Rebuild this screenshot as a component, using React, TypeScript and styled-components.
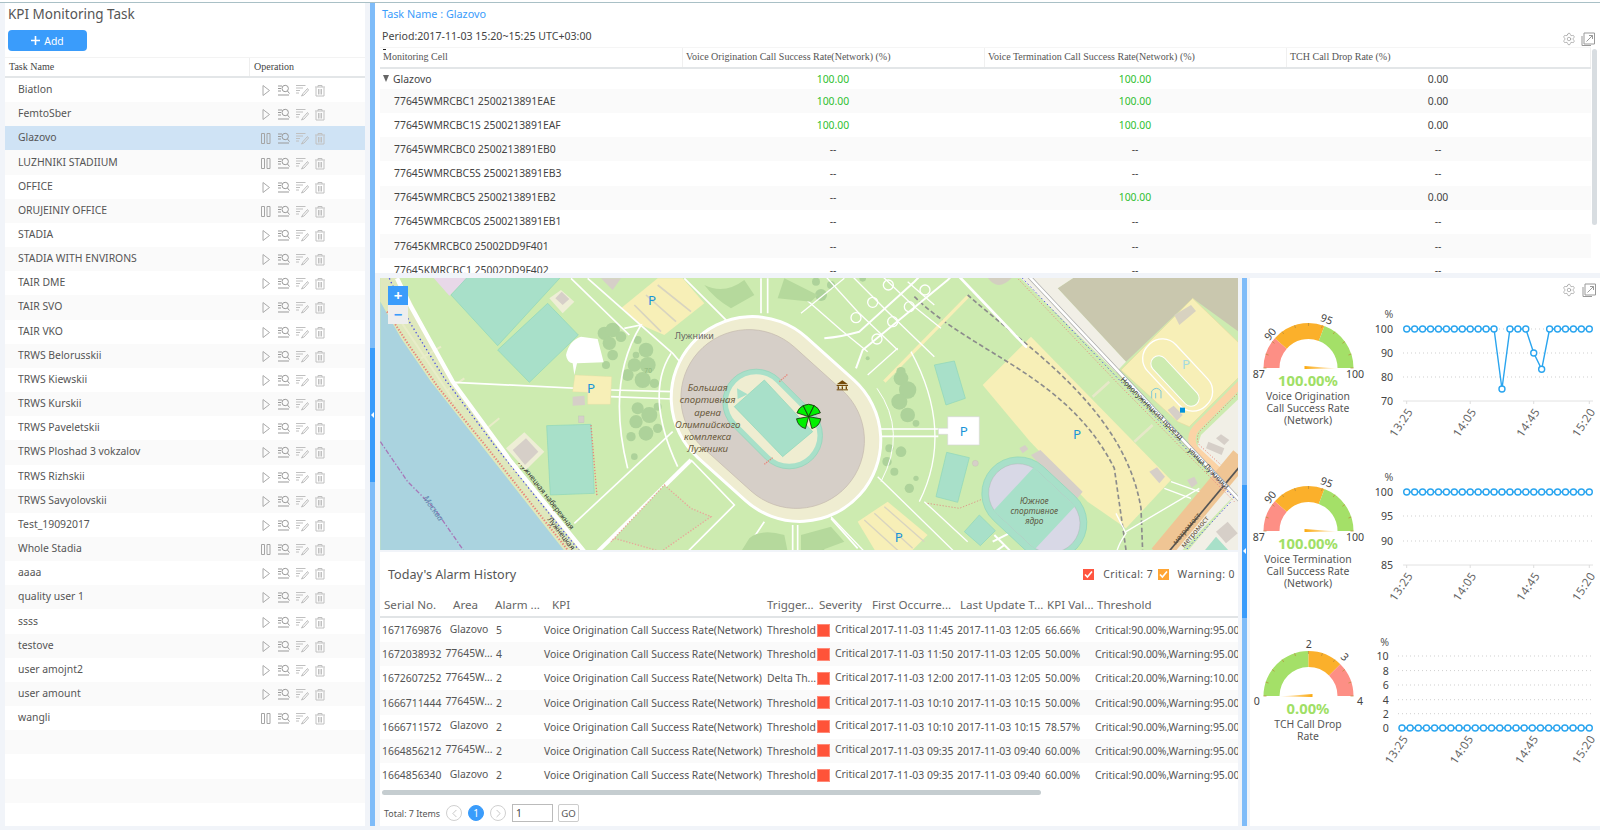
import React from "react";
import styled, { createGlobalStyle } from "styled-components";
import { ChevronLeft, ChevronRight, Settings } from "lucide-react";

const FONT = '"Noto Sans", "Open Sans", Arial, sans-serif';
const SERIF = '"Liberation Serif", "Times New Roman", serif';

const Global = createGlobalStyle`
  html, body { margin: 0; padding: 0; background: #f1f4f9; }
  * { box-sizing: border-box; }
  body { font-family: ${FONT}; font-size: 10.4px; color: #555; }
`;

const Page = styled.div`
  width: 1600px; height: 830px; overflow: hidden; display: flex; flex-direction: column; background: #f1f4f9;
`;
const TopEdge = styled.div`
  height: 3px; flex: none; background: #fff; border-bottom: 1px solid #a9c0c6;
`;
const Body = styled.div`
  height: 823px; flex: none; display: flex; padding-left: 5px;
`;

/* sidebar */
const Sidebar = styled.aside`
  width: 360px; flex: none; background: #fff; overflow: hidden; display: flex; flex-direction: column;
`;
const Title = styled.h1`
  margin: 0; padding-left: 3px; height: 22px; line-height: 22px; font-size: 13.5px; font-weight: 400; color: #555;
`;
const AddButton = styled.button`
  margin: 5px 0 0 3px; width: 79px; height: 21px; flex: none; border: 0; border-radius: 4px; background: #3a9cfb;
  color: #fff; font: 400 10.4px ${FONT}; display: flex; align-items: center; justify-content: center; gap: 4px; padding: 0;
`;
const ListHead = styled.div`
  margin-top: 6px; height: 21px; flex: none; display: grid; grid-template-columns: 245px 1fr; border-bottom: 2px solid #e3e6e8;
  border-top: 1px solid #f3f3f3; font: 10px ${SERIF}; color: #444; line-height: 17px;
`;
const ListHeadCell = styled.div<{ $divider?: boolean }>`
  padding-left: 4px;
  border-right: ${(p) => (p.$divider ? "1px solid #eee" : "none")};
`;
const TaskRow = styled.div<{ $zebra: boolean; $selected: boolean }>`
  height: 24.17px; flex: none; display: grid; grid-template-columns: 254px 1fr; align-items: center;
  background: ${(p) => (p.$selected ? "#cfe3f5" : p.$zebra ? "#fafafa" : "#fff")};
`;
const TaskName = styled.div`
  padding: 0 0 2px 13px; font-size: 10.4px; color: #555; white-space: nowrap;
`;
const Ops = styled.div`
  display: flex; gap: 4px; height: 14px;
`;

/* splitter */
const Splitter = styled.div<{ $from: number; $to: number; $gapL: number; $gapR: number; $w: number; $arrow: number }>`
  position: relative; flex: none; width: ${(p) => p.$w}px; margin: 0 ${(p) => p.$gapR}px 0 ${(p) => p.$gapL}px;
  background: linear-gradient(#7fbcf9 ${(p) => p.$from}px, #3a9cfb ${(p) => p.$from}px, #3a9cfb ${(p) => p.$to}px, #7fbcf9 ${(p) => p.$to}px);
  &::after {
    content: ""; position: absolute; left: 0.5px; top: ${(p) => p.$arrow}px;
    border: 3px solid transparent; border-right: 3px solid #fff; border-left: 0;
  }
`;

/* main */
const Main = styled.main`
  flex: 1; min-width: 0; display: flex; flex-direction: column;
`;
const CellPanel = styled.section`
  height: 270px; flex: none; background: #fff; position: relative; overflow: hidden;
`;
const TaskTitle = styled.div`
  height: 22px; line-height: 22px; padding-left: 7px; color: #3a9cfb; font-size: 10.8px;
`;
const PeriodRow = styled.div`
  height: 22px; padding: 0 5px 0 7px; display: flex; justify-content: space-between; align-items: flex-end; color: #444; font-size: 10.6px; line-height: 22px;
`;
const Period = styled.span`
  align-self: center;
`;
const Tools = styled.div`
  display: flex; gap: 5px; align-items: center; color: #888; height: 14px; margin-bottom: 1px;
`;
const CellGrid = styled.div`
  margin-left: 5px; width: 1211px;
`;
const CellHead = styled.div`
  display: grid; grid-template-columns: 303px 302px 302px 304px; height: 22px; border-bottom: 2px solid #e3e6e8; border-top: 1px solid #f5f5f5;
  font: 10px ${SERIF}; color: #555; line-height: 18px; position: relative;
  &::before { content: ""; position: absolute; left: 3px; top: 1px; width: 3px; height: 3px; border-top: 1px solid #222; }
`;
const CellHeadItem = styled.div`
  padding-left: 3px; border-right: 1px solid #f0f0f0; white-space: nowrap;
`;
const CellRow = styled.div<{ $zebra: boolean; $first?: boolean }>`
  display: grid; grid-template-columns: 303px 302px 302px 304px; align-items: center; padding-bottom: 1px;
  height: ${(p) => (p.$first ? "20px" : "24.17px")};
  background: ${(p) => (p.$zebra ? "#fafafa" : "#fff")};
`;
const CellName = styled.div<{ $root?: boolean }>`
  padding-left: ${(p) => (p.$root ? 3 : 14)}px; display: flex; align-items: center; gap: 4px; white-space: nowrap; color: #444; font-size: 10.4px;
`;
const Caret = styled.span`
  width: 0; height: 0; border-left: 3.5px solid transparent; border-right: 3.5px solid transparent; border-top: 7px solid #666;
`;
const CellValue = styled.div<{ $good?: boolean }>`
  text-align: center; font-size: 10.4px; padding-right: 2px; color: ${(p) => (p.$good ? "#2fbf2f" : "#444")};
`;
const VScroll = styled.div`
  position: absolute; right: 3px; top: 46px; width: 5px; height: 176px; border-radius: 3px; background: #d8dde1;
`;

const LowerRow = styled.div`
  margin-top: 5px; height: 548px; flex: none; display: flex; padding-left: 5px;
`;
const LeftColumn = styled.div`
  width: 858px; flex: none; display: flex; flex-direction: column;
`;
const MapBox = styled.div`
  height: 272px; flex: none; position: relative; overflow: hidden;
`;
const MapSvg = styled.svg`
  display: block; width: 858px; height: 272px;
`;
const Zoom = styled.div`
  position: absolute; left: 8px; top: 8px; width: 20px; display: flex; flex-direction: column;
`;
const ZoomBtn = styled.div<{ $on?: boolean }>`
  height: 19px; background: ${(p) => (p.$on ? "#3a9cfb" : "#eee")}; color: ${(p) => (p.$on ? "#fff" : "#3a9cfb")};
  font: 700 15px/18px ${FONT}; text-align: center;
`;

/* alarms */
const AlarmPanel = styled.section`
  margin-top: 2px; flex: 1; background: #fff; overflow: hidden; display: flex; flex-direction: column;
`;
const AlarmTop = styled.div`
  height: 44px; flex: none; display: flex; align-items: center; justify-content: space-between; padding: 0 3px 0 8px;
`;
const AlarmTitle = styled.div`
  font-size: 12.6px; color: #555;
`;
const Legend = styled.div`
  display: flex; align-items: center; font-size: 10.4px; letter-spacing: 0.45px; color: #555;
`;
const LegendItem = styled.span`
  display: flex; align-items: center; gap: 9px; margin-left: 4.5px;
`;
const Check = styled.span<{ $c: string }>`
  width: 11px; height: 11px; background: ${(p) => p.$c}; display: flex; align-items: center; justify-content: center;
`;
const COLS = "64px 50px 48px 224px 51px 53px 87px 88px 50px 143px";
const AlarmHead = styled.div`
  height: 22px; flex: none; display: grid; grid-template-columns: ${COLS}; border-bottom: 2px solid #e1e4e6; font-size: 11.6px; color: #666; line-height: 18px;
`;
const AlarmHeadCell = styled.div<{ $pad: number }>`
  padding-left: ${(p) => p.$pad}px; white-space: nowrap; overflow: hidden;
`;
const AlarmRow = styled.div<{ $zebra: boolean }>`
  height: 24.17px; flex: none; display: grid; grid-template-columns: ${COLS}; align-items: center; background: ${(p) => (p.$zebra ? "#fafafa" : "#fff")};
  font-size: 10.4px; color: #555; white-space: nowrap;
`;
const Cell = styled.div<{ $pad?: number; $center?: boolean; $up?: boolean }>`
  padding-left: ${(p) => p.$pad ?? 0}px; overflow: hidden; text-align: ${(p) => (p.$center ? "center" : "left")};
  padding-bottom: ${(p) => (p.$up ? 3 : 0)}px;
`;
const SeverityCell = styled.div`
  display: flex; align-items: center; gap: 5px;
`;
const SevMark = styled.span`
  width: 13px; height: 13px; flex: none; background: #ff5339; border: 1px solid #ff8a78;
`;
const SevText = styled.span`
  padding-bottom: 3px;
`;
const HScrollTrack = styled.div`
  height: 5px; margin: 3px 0 0 2px; width: 659px; flex: none; border-radius: 3px; background: #c5cdd0;
`;
const Pager = styled.div`
  margin-top: 9px; padding-left: 4px; display: flex; align-items: center; height: 18px; font-size: 8.9px; color: #555;
`;
const PageCircle = styled.span<{ $on?: boolean }>`
  width: 16px; height: 16px; border-radius: 50%; margin-left: 6px; display: flex; align-items: center; justify-content: center;
  border: 1px solid ${(p) => (p.$on ? "#3a9cfb" : "#d0d0d0")}; background: ${(p) => (p.$on ? "#3a9cfb" : "#fff")};
  color: ${(p) => (p.$on ? "#fff" : "#aaa")}; font-size: 10px;
`;
const PageInput = styled.input`
  width: 41px; height: 18px; margin-left: 6px; border: 1px solid #bbb; padding: 0 3px; font: 10.4px ${FONT}; color: #444;
`;
const GoButton = styled.button`
  width: 21px; height: 18px; margin-left: 5px; padding: 0; border: 1px solid #ccc; border-radius: 2px; background: #fff; font: 9.6px ${FONT}; color: #555;
`;

/* right */
const KpiPanel = styled.section`
  flex: 1; background: #fff; min-width: 0; display: flex; flex-direction: column;
`;
const KpiTools = styled.div`
  height: 22px; flex: none; display: flex; justify-content: flex-end; align-items: center; gap: 6px; padding: 1px 4px 0 0; color: #888;
`;
const KpiRow = styled.div<{ $top: number }>`
  height: 163px; flex: none; margin-top: ${(p) => p.$top}px; display: flex;
`;
const GaugeCol = styled.div`
  width: 116px; flex: none; text-align: center;
`;
const GaugeValue = styled.div`
  font: 700 14.8px/14px ${FONT}; color: #a0df66; margin-top: -2.5px;
`;
const GaugeTitle = styled.div`
  margin-top: 3.5px; font-size: 10.4px; line-height: 12px; color: #555;
`;
const GaugeLine = styled.div`
  white-space: nowrap;
`;
const ChartSvg = styled.svg`
  display: block; flex: none; overflow: visible;
`;
const GaugeSvg = styled.svg`
  display: block; overflow: visible;
`;

/* icons */
const I = { width: 14, height: 14, viewBox: "0 0 14 14", fill: "none" };
const PlayIcon = () => (
  <svg {...I}><path d="M4 2.5 L10.5 7.5 L4 12.5 Z" stroke="#aaa" /></svg>
);
const PauseIcon = () => (
  <svg {...I}><path d="M2.5 2.5h3v10h-3zM8 2.5h3v10h-3z" stroke="#a5a5a5" /></svg>
);
const DetailIcon = () => (
  <svg {...I}><path d="M1 3h4M1 5.5h3M1 8h3M1 12h11" stroke="#999" /><circle cx="8.2" cy="5.5" r="3.2" stroke="#999" /><path d="M10.5 8l2 2.6" stroke="#999" /></svg>
);
const EditIcon = () => (
  <svg {...I}><path d="M1 2.5h9.5M1 5h7M1 7.5h4M1 10h3" stroke="#c0c0c0" /><path d="M12.5 5.5 L8 10.5 L6.5 13 L9 12 L13.5 7 Z" stroke="#bdbdbd" /></svg>
);
const TrashIcon = () => (
  <svg {...I}><path d="M2 4h10M5 4V2.5h4V4M3 4.5v8.5h8V4.5M5.5 6v5.5M7 6v5.5M8.5 6v5.5" stroke="#c0c0c0" /></svg>
);
const ExpandIcon = () => (
  <svg width="14" height="14" viewBox="0 0 14 14" fill="none"><path d="M3 1h10.5v11H3zM1 4v9.5h9" stroke="#999" /><path d="M5.5 9.5l6-6M8 3.5h3.5V7" stroke="#999" /></svg>
);
const Tick = () => (
  <svg width="9" height="9" viewBox="0 0 9 9" fill="none"><path d="M1 4.5l2.4 2.6L8 1.5" stroke="#fff" strokeWidth="1.6" /></svg>
);

const tasks: [string, boolean][] = [
  ["Biatlon", false], ["FemtoSber", false], ["Glazovo", true], ["LUZHNIKI STADIIUM", true], ["OFFICE", false], ["ORUJEINIY OFFICE", true],
  ["STADIA", false], ["STADIA WITH ENVIRONS", false], ["TAIR DME", false], ["TAIR SVO", false], ["TAIR VKO", false], ["TRWS Belorusskii", false],
  ["TRWS Kiewskii", false], ["TRWS Kurskii", false], ["TRWS Paveletskii", false], ["TRWS Ploshad 3 vokzalov", false], ["TRWS Rizhskii", false],
  ["TRWS Savyolovskii", false], ["Test_19092017", false], ["Whole Stadia", true], ["aaaa", false], ["quality user 1", false], ["ssss", false],
  ["testove", false], ["user amojnt2", false], ["user amount", false], ["wangli", true],
];
const cells: [string, string, string, string][] = [
  ["77645WMRCBC1 2500213891EAE", "100.00", "100.00", "0.00"],
  ["77645WMRCBC1S 2500213891EAF", "100.00", "100.00", "0.00"],
  ["77645WMRCBC0 2500213891EB0", "--", "--", "--"],
  ["77645WMRCBC5S 2500213891EB3", "--", "--", "--"],
  ["77645WMRCBC5 2500213891EB2", "--", "100.00", "0.00"],
  ["77645WMRCBC0S 2500213891EB1", "--", "--", "--"],
  ["77645KMRCBC0 25002DD9F401", "--", "--", "--"],
  ["77645KMRCBC1 25002DD9F402", "--", "--", "--"],
];
const alarms = [
  ["1671769876", "Glazovo", "5", "Threshold", "2017-11-03 11:45", "2017-11-03 12:05", "66.66%", "Critical:90.00%,Warning:95.00%"],
  ["1672038932", "77645W...", "4", "Threshold", "2017-11-03 11:50", "2017-11-03 12:05", "50.00%", "Critical:90.00%,Warning:95.00%"],
  ["1672607252", "77645W...", "2", "Delta Th...", "2017-11-03 12:00", "2017-11-03 12:05", "50.00%", "Critical:20.00%,Warning:10.00%"],
  ["1666711444", "77645W...", "2", "Threshold", "2017-11-03 10:10", "2017-11-03 10:15", "50.00%", "Critical:90.00%,Warning:95.00%"],
  ["1666711572", "Glazovo", "2", "Threshold", "2017-11-03 10:10", "2017-11-03 10:15", "78.57%", "Critical:90.00%,Warning:95.00%"],
  ["1664856212", "77645W...", "2", "Threshold", "2017-11-03 09:35", "2017-11-03 09:40", "60.00%", "Critical:90.00%,Warning:95.00%"],
  ["1664856340", "Glazovo", "2", "Threshold", "2017-11-03 09:35", "2017-11-03 09:40", "60.00%", "Critical:90.00%,Warning:95.00%"],
];
const alarmHeads: [string, number][] = [
  ["Serial No.", 4], ["Area", 9], ["Alarm ...", 1], ["KPI", 10], ["Trigger...", 1], ["Severity", 2], ["First Occurre...", 2], ["Last Update T...", 3], ["KPI Val...", 2], ["Threshold", 2],
];

type Band = [number, number, string];
type Lab = [number, number, number, string];
const GX = 58.5, GY = 68, RO = 45, RI = 29;
const pt = (f: number, r: number) => [GX - r * Math.cos(Math.PI * f), GY - r * Math.sin(Math.PI * f)];
const arc = (a: number, b: number) => {
  const [x1, y1] = pt(a, RO), [x2, y2] = pt(b, RO), [x3, y3] = pt(b, RI), [x4, y4] = pt(a, RI);
  return `M${x1} ${y1}A${RO} ${RO} 0 0 1 ${x2} ${y2}L${x3} ${y3}A${RI} ${RI} 0 0 0 ${x4} ${y4}Z`;
};
const Gauge = ({ bands, labels, needle, id }: { bands: Band[]; labels: Lab[]; needle: number; id: string }) => {
  const dir = needle;
  return (
    <GaugeSvg width={116} height={75} viewBox="0 0 116 75">
      <defs>
        <linearGradient id={id} x1={dir > 0 ? 0 : 1} x2={dir > 0 ? 1 : 0} y1="0" y2="0">
          <stop offset="0" stopColor="#fba90f" /><stop offset="1" stopColor="#fba90f" stopOpacity="0.1" />
        </linearGradient>
      </defs>
      {bands.map((b) => <path key={b[0]} d={arc(b[0], b[1])} fill={b[2]} />)}
      {Array.from({ length: 11 }).map((_, i) => {
        const [a, b] = pt(i / 10, RO), [c, d] = pt(i / 10, RO - 3);
        return <line key={i} x1={a} y1={b} x2={c} y2={d} stroke="#b8893a" strokeWidth="0.7" />;
      })}
      <path d={`M${GX - 4 * dir} ${GY - 2}L${GX + 29 * dir} ${GY + 0.5}L${GX - 4 * dir} ${GY + 1}Z`} fill={`url(#${id})`} />
      {labels.map((l) => (
        <text key={l[3]} x={l[0]} y={l[1]} transform={`rotate(${l[2]} ${l[0]} ${l[1]})`} textAnchor="middle" dominantBaseline="central" fontFamily={FONT} fontSize="10.6" fill="#444">{l[3]}</text>
      ))}
    </GaugeSvg>
  );
};

const XLABELS: Record<number, string> = { 0: "13:25", 8: "14:05", 16: "14:45", 23: "15:20" };
type ChartProps = { values: number[]; y: (v: number) => number; ticks: [string, number][]; axis: number; p0: number; p1: number; g0: number; labelX: number; pctY: number };
const Chart = ({ values, y, ticks, axis, p0, p1, g0, labelX, pctY }: ChartProps) => {
  const step = (p1 - p0) / (values.length - 1);
  const xs = values.map((_, i) => p0 + i * step);
  return (
    <ChartSvg width={235} height={163} viewBox="0 0 235 163">
      <text x={labelX - 4} y={pctY} textAnchor="middle" dominantBaseline="central" fontFamily={FONT} fontSize="10.6" fill="#555">%</text>
      {ticks.map(([t, ty], i) => {
        const solid = i === ticks.length - 1 && ticks.length < 5;
        return (
          <g key={t}>
            <line x1={g0} x2={227} y1={ty} y2={ty} stroke={solid ? "#e2e2e2" : "#cfcfcf"} strokeDasharray={solid ? undefined : "1 3"} />
            <text x={labelX} y={ty} textAnchor="end" dominantBaseline="central" fontFamily={FONT} fontSize="10.6" fill="#444">{t}</text>
          </g>
        );
      })}
      {[0, 8, 16, 23].map((i) => (
        <g key={i}>
          <line x1={xs[i]} x2={xs[i]} y1={axis} y2={axis + 3} stroke="#ddd" />
          <text x={xs[i] + 3} y={axis + 8} textAnchor="end" dominantBaseline="central" transform={`rotate(-56 ${xs[i] + 3} ${axis + 8})`} fontFamily={FONT} fontSize="11.5" letterSpacing="0.5" fill="#666">
            {XLABELS[i]}
          </text>
        </g>
      ))}
      <polyline points={values.map((v, i) => `${xs[i]},${y(v)}`).join(" ")} fill="none" stroke="#2aa5ef" strokeWidth="1.4" />
      {values.map((v, i) => <circle key={i} cx={xs[i]} cy={y(v)} r="3" fill="#fff" stroke="#2aa5ef" strokeWidth="1.4" />)}
    </ChartSvg>
  );
};

const v1 = [...Array(12).fill(100), 75, 100, 100, 100, 90, 83.2, ...Array(6).fill(100)] as number[];
const v2 = Array(24).fill(100) as number[];
const v3 = Array(24).fill(0) as number[];

const Z4 = "translate(370 275) scale(0.33333)";
const Z5 = "translate(800 275) scale(0.33333)";
const PITCH = "#a8e0c9", PITCHS = "#8cd6ba", LOT = "#f7efb7", BLD = "#d6cfc8", PALE = "#efedd1", BLUE = "#1a95d8", TREE = "#add29a";
const LBL = { fontFamily: FONT, fontStyle: "italic" as const, textAnchor: "middle" as const };

const Trees = ({ spots }: { spots: number[][] }) => (
  <g fill={TREE}>{spots.map((s, i) => <circle key={i} cx={s[0]} cy={s[1]} r={s[2]} />)}</g>
);
const treesZ4 = [
  [700, 175, 20], [725, 165, 22], [750, 185, 16], [715, 205, 20], [725, 240, 16], [705, 270, 12],
  [800, 195, 12], [825, 225, 22], [790, 270, 20], [830, 270, 24], [770, 300, 18], [815, 315, 24], [850, 325, 14], [795, 240, 10],
  [800, 400, 18], [835, 420, 24], [795, 440, 20], [780, 485, 14], [825, 475, 22], [860, 460, 14], [790, 545, 10], [860, 395, 12],
];
const treesZ5 = [
  [300, 310, 22], [320, 345, 26], [295, 380, 24], [320, 420, 22], [300, 290, 14], [345, 445, 10],
  [265, 520, 12], [258, 560, 14], [300, 530, 16], [280, 590, 12], [325, 640, 14], [345, 610, 8],
  [60, 60, 18], [45, 20, 12], [90, 30, 12], [185, 10, 10], [200, 250, 6],
  [30, 810, 16], [60, 815, 12],
];

const MapArt = () => (
  <MapSvg viewBox="379 278 858 272">
    <rect x="379" y="278" width="858" height="272" fill="#cdebb0" />
    <g transform={Z5}>
      <polygon points="770,40 830,0 1320,0 1320,175 1175,70 975,260" fill="#c9c7ae" />
      <polygon points="650,0 830,0 770,40 975,260 945,292" fill="#f1efe6" />
      <polygon points="960,285 1175,70 1320,210 1320,300 1165,455 1130,440" fill={LOT} stroke="#e6d9a0" strokeWidth="2" />
      <rect x="-24" y="-95" width="48" height="190" rx="24" transform="translate(1122,318) rotate(-43)" fill="#cdebb0" stroke="#fff" strokeWidth="3" />
      <rect x="-58" y="-125" width="116" height="250" rx="55" transform="translate(1130,300) rotate(-43)" fill="none" stroke="#fff" strokeWidth="4" />
      <polygon points="1120,120 1170,90 1185,108 1135,150" fill="#d8d2c0" />
      <polygon points="1100,405 1118,392 1145,420 1128,437" fill={BLD} />
      <rect x="1137" y="398" width="15" height="15" fill="#0092da" />
      <text x="1155" y="282" fontFamily={FONT} fontSize="40" fill="#a5dbe0" textAnchor="middle">P</text>
      <path d="M1052 370v-22q14-16 28 0v22M1064 370v-16" stroke="#80c9d6" strokeWidth="3" fill="none" />
      <polygon points="1200,480 1320,365 1320,560 1240,625 1190,510" fill="#f1efe6" />
      <polygon points="1215,520 1222,500 1270,520 1262,540" fill={BLD} />
      <polygon points="1245,490 1260,478 1285,495 1270,510" fill={BLD} />
      <path d="M1320 325L1195 450Q1160 480 1180 520L1320 650" fill="none" stroke="#fbd3a6" strokeWidth="22" />
      <path d="M1320 345L1205 460Q1180 482 1195 510L1320 625" fill="none" stroke="#ec7a6a" strokeWidth="3" strokeDasharray="3 6" />
      <polygon points="1080,840 1320,580 1320,640 1130,840" fill="#f1efe6" />
      <path d="M1075 840L1320 545" stroke="#efc594" strokeWidth="60" fill="none" />
      <path d="M1095 840L1320 570" stroke="#555" strokeWidth="5" fill="none" />
      <text transform="translate(1125,810) rotate(-50)" fontFamily={FONT} fontSize="22" fill="#5b4a32">метромост</text>
      <text transform="translate(1150,820) rotate(-50)" fontFamily={FONT} fontSize="22" fill="#5b4a32">метромост</text>
      <polygon points="1150,840 1320,640 1320,840" fill="#f1efe6" />
      <polygon points="1245,770 1280,740 1310,775 1275,805" fill={BLD} />
      <polygon points="1200,840 1245,785 1295,840" fill={PITCH} />
      <path d="M1150 830L1290 680" stroke="#4a50e0" strokeWidth="3" strokeDasharray="4 7" fill="none" />
      <path d="M680 0L1320 680" stroke="#a8a8a8" strokeWidth="12" fill="none" />
      <path d="M680 0L1320 680" stroke="#fff" strokeWidth="8" fill="none" />
      <path d="M640 0L950 325L1300 680" stroke="#e8867a" strokeWidth="3" strokeDasharray="3 6" fill="none" />
      <path d="M655 0L960 320L1300 670" stroke="#4a50e0" strokeWidth="3" strokeDasharray="4 8" fill="none" />
      <polygon points="545,330 690,185 1110,615 975,760 860,680 685,497" fill={LOT} />
      <path d="M340 65C520 240 800 300 940 580L975 825M500 60C680 220 970 400 1020 700L1025 830" fill="none" stroke="#8c8c8c" strokeWidth="5" strokeDasharray="14 8" />
      <path d="M470 0L675 215" stroke="#fff" strokeWidth="8" strokeLinecap="round" />
      <path d="M500 65L250 320" stroke={LOT} strokeWidth="10" />
      <path d="M640 0Q590 60 555 0" fill="#d3cfc0" />
      <Trees spots={treesZ5} />
      <g stroke="#fff" strokeWidth="4" fill="none">
        <path d="M70 190Q120 185 175 170L340 20L360 0" strokeWidth="6" />
        <path d="M165 280L185 225L440 15L455 0" strokeWidth="6" />
        <path d="M0 115L130 10" />
        <path d="M150 0L260 110L400 245M70 0L170 110L290 225M240 0L340 95L420 160M320 20L400 90" />
        <path d="M0 60L120 165L200 230M200 300L290 220" />
        <circle cx="165" cy="128" r="15" /><circle cx="215" cy="82" r="15" /><circle cx="275" cy="140" r="15" /><circle cx="325" cy="95" r="15" /><circle cx="228" cy="192" r="15" /><circle cx="372" cy="45" r="15" /><circle cx="262" cy="30" r="15" />
        <path d="M330 230Q460 470 355 680" /><path d="M228 340Q320 470 240 620" strokeWidth="3" />
        <path d="M240 462H440M240 484H412" strokeWidth="5" />
        <path d="M370 680L500 800M230 605L470 840M90 725L200 840" />
        <path d="M945 715L975 775Q950 810 945 840M975 770L1195 640M1110 620L1195 650M1090 640L1170 670" />
        <path d="M875 365L925 320M1000 500L1055 450" stroke="#e6e8c8" strokeWidth="8" />
      </g>
      <polygon points="400,270 460,258 493,370 435,390" fill={PITCH} stroke={PITCHS} strokeWidth="2" />
      <polygon points="437,532 505,548 470,682 405,665" fill={PITCH} stroke={PITCHS} strokeWidth="2" />
      <circle cx="523" cy="565" r="9" fill={BLD} stroke="#c0b8ae" />
      <polygon points="440,425 535,425 535,510 440,510 440,478 412,478 412,460 440,460" fill="#fff" stroke="#d8d8d8" strokeWidth="2" />
      <text x="488" y="482" fontFamily={FONT} fontSize="40" fill={BLUE} textAnchor="middle">P</text>
      <text x="828" y="492" fontFamily={FONT} fontSize="40" fill={BLUE} textAnchor="middle">P</text>
      <polygon points="690,540 718,525 845,650 820,680" fill={BLD} />
      <polygon points="655,520 672,510 682,522 665,535" fill={BLD} />
      <polygon points="1045,590 1068,577 1092,605 1075,625" fill={BLD} />
      <polygon points="1158,615 1180,605 1190,625 1172,638" fill={BLD} />
      <polygon points="170,740 260,680 380,780 320,840 230,840" fill={LOT} />
      <path d="M190 735L300 835M220 715L335 820M250 695L370 800" stroke="#d8d4c0" strokeWidth="4" />
      <text x="293" y="802" fontFamily={FONT} fontSize="40" fill={BLUE} textAnchor="middle">P</text>
      <polygon points="490,770 535,720 583,767 538,812" fill={PITCH} stroke={PITCHS} strokeWidth="2" />
      <path d="M380 685L475 700L545 672" stroke="#dd9a8a" strokeWidth="3" strokeDasharray="4 5" fill="none" />
      <path d="M575 800L635 770M580 780L640 840M610 810L570 840" stroke="#fff" strokeWidth="6" fill="none" />
      <g transform="translate(700,700) rotate(43)">
        <rect x="-175" y="-110" width="350" height="220" rx="110" fill={PITCH} stroke={PITCHS} strokeWidth="2" />
        <rect x="-155" y="-88" width="310" height="176" rx="88" fill="#d8d8e6" stroke="#aaa" strokeWidth="1" />
        <rect x="-85" y="-88" width="170" height="176" fill={PITCH} />
      </g>
      <text x="700" y="686" {...LBL} fontSize="25" fill="#5f5a44">Южное</text>
      <text x="700" y="716" {...LBL} fontSize="25" fill="#5f5a44">спортивное</text>
      <text x="700" y="746" {...LBL} fontSize="25" fill="#5f5a44">ядро</text>
      <text transform="translate(1047,405) rotate(45)" fontFamily={FONT} fontSize="22" fill="#333" textAnchor="middle">Новолужнецкий проезд</text>
      <text transform="translate(1218,585) rotate(45)" fontFamily={FONT} fontSize="22" fill="#333" textAnchor="middle">улица Лужники</text>
    </g>
    <g transform={Z4}>
      <polygon points="28,0 80,0 245,320 430,570 650,840 590,840 330,510 180,320 90,190 28,80" fill="#dfe8bd" />
      <polygon points="28,80 90,190 180,320 330,510 590,840 28,840" fill="#aad3df" />
      <path d="M48 110L110 205L200 335L350 520L590 825" fill="none" stroke="#e8867a" strokeWidth="6" strokeDasharray="4 5" />
      <path d="M70 110L250 380M150 250L210 215M230 345L280 310M330 475L385 430M420 590L460 555" stroke="#e8ecc8" strokeWidth="6" fill="none" />
      <path d="M55 10L115 140L220 310L370 510L570 760L632 835" fill="none" stroke="#4a50e0" strokeWidth="4" strokeDasharray="4 8" />
      <path d="M78 10L120 95L245 320L420 560L640 830" fill="none" stroke="#fff" strokeWidth="13" />
      <path d="M28 500L110 620L190 700L280 830" fill="none" stroke="#a777b8" strokeWidth="4" strokeDasharray="14 6 4 6" />
      <text transform="translate(180,705) rotate(55)" fontFamily={FONT} fontStyle="italic" fontSize="25" fill="#5e84ad" textAnchor="middle">Москва</text>
      <text transform="translate(520,665) rotate(52)" fontFamily={FONT} fontSize="22" fill="#333" textAnchor="middle">Лужнецкая набережная</text>
      <text transform="translate(565,780) rotate(52)" fontFamily={FONT} fontSize="22" fill="#333" textAnchor="middle">Лужнецкая</text>
      <polygon points="180,0 300,0 235,62" fill="#e8d8e8" />
      <polygon points="240,60 295,0 575,0 380,212" fill={PITCH} stroke={PITCHS} strokeWidth="2" />
      <polygon points="380,225 530,85 622,180 475,322" fill={PITCH} stroke={PITCHS} strokeWidth="2" />
      <polygon points="527,452 660,448 670,655 538,660" fill={PITCH} stroke={PITCHS} strokeWidth="2" />
      <path d="M660 450L678 665" stroke="#e8867a" strokeWidth="4" strokeDasharray="4 5" />
      <polygon points="405,520 460,472 520,530 465,585" fill="#eeeed6" />
      <polygon points="425,525 465,490 502,530 462,570" fill={BLD} />
      <polygon points="535,70 570,45 610,80 575,115" fill="#eeeed6" />
      <polygon points="553,70 572,50 595,72 575,90" fill={BLD} />
      <polygon points="690,10 750,10 725,45" fill={BLD} />
      <Trees spots={treesZ4} />
      <path d="M585 240Q595 195 630 185L680 192L698 262L618 265L610 300L605 265Q588 262 585 240Z" fill="#fff" />
      <text x="820" y="295" fontFamily={FONT} fontSize="20" fill="#8fb87c">70</text>
      <path d="M250 322L720 345L905 350M720 365L905 372" stroke="#fff" strokeWidth="5" fill="none" />
      <polygon points="612,300 722,305 718,388 650,388 650,352 605,350" fill={LOT} stroke="#e8dca0" />
      <polygon points="605,365 640,362 642,390 605,392" fill={BLD} />
      <rect x="623" y="423" width="16" height="20" fill={BLD} stroke="#bbb" />
      <text x="660" y="354" fontFamily={FONT} fontSize="40" fill={BLUE} textAnchor="middle">P</text>
      <polygon points="750,100 860,10 935,10 1000,85 880,180 810,150" fill={LOT} />
      <path d="M790 90L870 170M825 60L915 140M860 30L960 110" stroke="#d8d4c0" strokeWidth="5" />
      <text x="843" y="90" fontFamily={FONT} fontSize="40" fill={BLUE} textAnchor="middle">P</text>
      <g stroke="#fff" fill="none" strokeWidth="5">
        <path d="M600 10L775 180M650 10L905 235L960 300" />
        <path d="M940 10L1070 140M760 160L810 150Q705 320 770 580" />
        <path d="M900 235Q820 360 920 575" />
        <path d="M1170 10V115M1190 10V115" />
        <path d="M610 745L905 470" />
        <path d="M680 830L960 555" strokeWidth="12" />
        <path d="M960 555L1090 690L950 830M1180 740L1120 830M1265 750V830M1280 750V830M1380 730L1460 820" />
      </g>
      <path d="M880 630L960 700L1020 725L870 830L730 790L720 800Z" fill="#c8e6ae" stroke="#e8a79a" strokeWidth="4" strokeDasharray="4 5" />
      <path d="M1000 30Q1060 60 1120 15L1150 60L1080 100Q1030 70 1000 30ZM1240 10L1340 60L1320 80L1220 70Z" fill="#b5d99c" />
      <path d="M1135 790Q1170 760 1240 780L1250 830H1110ZM1290 780L1380 755L1420 800L1340 830H1290Z" fill="#b5d99c" />
      <g transform="translate(1215,432) rotate(42)">
        <rect x="-339" y="-243" width="678" height="486" rx="243" fill={PALE} stroke="#fff" strokeWidth="9" />
      </g>
      <g transform="translate(1205,432) rotate(42)">
        <rect x="-300" y="-204" width="600" height="408" rx="204" fill={BLD} stroke="#c4b9ae" strokeWidth="2" />
      </g>
      <g transform="translate(1205,432) rotate(45)">
        <rect x="-170" y="-100" width="340" height="200" rx="100" fill={PITCH} stroke={PITCHS} strokeWidth="2" />
        <rect x="-155" y="-85" width="310" height="170" rx="85" fill={PALE} />
      </g>
      <polygon points="1090,395 1180,315 1325,470 1235,545" fill={PITCH} stroke={PITCHS} strokeWidth="2" />
      <polygon points="1098,340 1130,358 1100,372" fill={PITCH} />
      <path d="M1225 320L1250 298M1180 568L1205 548" stroke="#e8867a" strokeWidth="4" strokeDasharray="4 3" />
      <g fill="#734a08">
        <path d="M1397 328L1414 316L1431 328Z" />
        <rect x="1397" y="330" width="34" height="3" />
        <rect x="1400" y="334" width="4" height="9" /><rect x="1412" y="334" width="4" height="9" /><rect x="1424" y="334" width="4" height="9" />
        <rect x="1397" y="343" width="34" height="3" />
      </g>
      <text x="970" y="193" fontFamily={FONT} fontSize="27" fill="#666" textAnchor="middle">Лужники</text>
      {["Большая", "спортивная", "арена", "Олимпийского", "комплекса", "Лужники"].map((t, i) => (
        <text key={t} x="1010" y={348 + i * 36.8} {...LBL} fontSize="29" fill="#6b5b3e">{t}</text>
      ))}
      <g fill="#00f000" stroke="#1a2a10" strokeWidth="2.5">
        {[[-72, -26], [-26, 26], [26, 72], [100, 165], [195, 260]].map(([a, b]) => {
          const r = 37, cx = 1313, cy = 425;
          const p = (d: number) => `${cx + r * Math.sin((d * Math.PI) / 180)} ${cy - r * Math.cos((d * Math.PI) / 180)}`;
          return <path key={a} d={`M${cx} ${cy}L${p(a)}A${r} ${r} 0 0 1 ${p(b)}Z`} />;
        })}
      </g>
    </g>
  </MapSvg>
);

const band3: Band[] = [[0, 0.2308, "#fd8f85"], [0.2308, 0.6154, "#fbb02b"], [0.6154, 1, "#a4e068"]];
const lab3: Lab[] = [[8.7, 74, 0, "87"], [105, 74, 0, "100"], [20, 34, -50, "90"], [76.7, 19, 22, "95"]];

export default function App() {
  return (
    <Page>
      <Global />
      <TopEdge />
      <Body>
        <Sidebar>
          <Title>KPI Monitoring Task</Title>
          <AddButton><svg width="9" height="9" viewBox="0 0 9 9"><path d="M4.5 0v9M0 4.5h9" stroke="#fff" strokeWidth="1.6" /></svg>Add</AddButton>
          <ListHead><ListHeadCell $divider>Task Name</ListHeadCell><ListHeadCell>Operation</ListHeadCell></ListHead>
          {Array.from({ length: 31 }).map((_, i) => {
            const t = tasks[i];
            return (
              <TaskRow key={i} $zebra={i % 2 === 1} $selected={i === 2}>
                {t && <TaskName>{t[0]}</TaskName>}
                {t && <Ops>{t[1] ? <PauseIcon /> : <PlayIcon />}<DetailIcon /><EditIcon /><TrashIcon /></Ops>}
              </TaskRow>
            );
          })}
        </Sidebar>
        <Splitter $w={5} $gapL={5} $gapR={0} $from={345} $to={479} $arrow={409} />
        <Main>
          <CellPanel>
            <TaskTitle>Task Name : Glazovo</TaskTitle>
            <PeriodRow>
              <Period>Period:2017-11-03 15:20~15:25 UTC+03:00</Period>
              <Tools><Settings size={14} strokeWidth={1} /><ExpandIcon /></Tools>
            </PeriodRow>
            <CellGrid>
              <CellHead>
                <CellHeadItem>Monitoring Cell</CellHeadItem>
                <CellHeadItem>Voice Origination Call Success Rate(Network) (%)</CellHeadItem>
                <CellHeadItem>Voice Termination Call Success Rate(Network) (%)</CellHeadItem>
                <CellHeadItem>TCH Call Drop Rate (%)</CellHeadItem>
              </CellHead>
              <CellRow $zebra={false} $first>
                <CellName $root><Caret />Glazovo</CellName>
                <CellValue $good>100.00</CellValue><CellValue $good>100.00</CellValue><CellValue>0.00</CellValue>
              </CellRow>
              {cells.map((c, i) => (
                <CellRow key={c[0]} $zebra={i % 2 === 0}>
                  <CellName>{c[0]}</CellName>
                  <CellValue $good={c[1] !== "--"}>{c[1]}</CellValue>
                  <CellValue $good={c[2] !== "--"}>{c[2]}</CellValue>
                  <CellValue>{c[3]}</CellValue>
                </CellRow>
              ))}
            </CellGrid>
            <VScroll />
          </CellPanel>
          <LowerRow>
            <LeftColumn>
              <MapBox>
                <MapArt />
                <Zoom><ZoomBtn $on>+</ZoomBtn><ZoomBtn>−</ZoomBtn></Zoom>
              </MapBox>
              <AlarmPanel>
                <AlarmTop>
                  <AlarmTitle>Today's Alarm History</AlarmTitle>
                  <Legend>
                    <LegendItem><Check $c="#ff5540"><Tick /></Check>Critical: 7</LegendItem>
                    <LegendItem><Check $c="#ffa534"><Tick /></Check>Warning: 0</LegendItem>
                  </Legend>
                </AlarmTop>
                <AlarmHead>{alarmHeads.map(([t, p]) => <AlarmHeadCell key={t} $pad={p}>{t}</AlarmHeadCell>)}</AlarmHead>
                {alarms.map((a, i) => (
                  <AlarmRow key={a[0]} $zebra={i % 2 === 1}>
                    <Cell $pad={2}>{a[0]}</Cell>
                    <Cell $center $up>{a[1]}</Cell>
                    <Cell $pad={2}>{a[2]}</Cell>
                    <Cell $pad={2}>Voice Origination Call Success Rate(Network)</Cell>
                    <Cell $pad={1}>{a[3]}</Cell>
                    <SeverityCell><SevMark /><SevText>Critical</SevText></SeverityCell>
                    <Cell>{a[4]}</Cell>
                    <Cell>{a[5]}</Cell>
                    <Cell>{a[6]}</Cell>
                    <Cell>{a[7]}</Cell>
                  </AlarmRow>
                ))}
                <HScrollTrack />
                <Pager>
                  Total: 7 Items
                  <PageCircle><ChevronLeft size={13} strokeWidth={1.2} /></PageCircle>
                  <PageCircle $on>1</PageCircle>
                  <PageCircle><ChevronRight size={13} strokeWidth={1.2} /></PageCircle>
                  <PageInput defaultValue="1" />
                  <GoButton>GO</GoButton>
                </Pager>
              </AlarmPanel>
            </LeftColumn>
            <Splitter $w={5} $gapL={4} $gapR={3} $from={207} $to={340} $arrow={270} />
            <KpiPanel>
              <KpiTools><Settings size={14} strokeWidth={1} /><ExpandIcon /></KpiTools>
              <KpiRow $top={0}>
                <GaugeCol>
                  <Gauge id="g1" needle={1} bands={band3} labels={lab3} />
                  <GaugeValue>100.00%</GaugeValue>
                  <GaugeTitle><GaugeLine>Voice Origination</GaugeLine><GaugeLine>Call Success Rate</GaugeLine><GaugeLine>(Network)</GaugeLine></GaugeTitle>
                </GaugeCol>
                <Chart values={v1} y={(v) => 29 + (100 - v) * 2.4} ticks={[["100", 29], ["90", 53], ["80", 77], ["70", 101]]} axis={101} p0={40.7} p1={223.3} g0={37} labelX={27} pctY={14} />
              </KpiRow>
              <KpiRow $top={0}>
                <GaugeCol>
                  <Gauge id="g2" needle={1} bands={band3} labels={lab3} />
                  <GaugeValue>100.00%</GaugeValue>
                  <GaugeTitle><GaugeLine>Voice Termination</GaugeLine><GaugeLine>Call Success Rate</GaugeLine><GaugeLine>(Network)</GaugeLine></GaugeTitle>
                </GaugeCol>
                <Chart values={v2} y={() => 29} ticks={[["100", 29], ["95", 53], ["90", 78], ["85", 102]]} axis={102} p0={40.7} p1={223.3} g0={37} labelX={27} pctY={14} />
              </KpiRow>
              <KpiRow $top={2}>
                <GaugeCol>
                  <Gauge id="g3" needle={-1} bands={[[0, 0.5, "#a4e068"], [0.5, 0.75, "#fbb02b"], [0.75, 1, "#fd8f85"]]} labels={[[6.7, 73, 0, "0"], [110, 73, 0, "4"], [58.7, 16, 0, "2"], [95, 28.7, 45, "3"]]} />
                  <GaugeValue>0.00%</GaugeValue>
                  <GaugeTitle><GaugeLine>TCH Call Drop</GaugeLine><GaugeLine>Rate</GaugeLine></GaugeTitle>
                </GaugeCol>
                <Chart values={v3} y={() => 100} ticks={[["10", 28], ["8", 42.6], ["6", 57], ["4", 71.7], ["2", 85.7], ["0", 100]]} axis={100} p0={36} p1={223.3} g0={32} labelX={22.7} pctY={13.7} />
              </KpiRow>
            </KpiPanel>
          </LowerRow>
        </Main>
      </Body>
    </Page>
  );
}
